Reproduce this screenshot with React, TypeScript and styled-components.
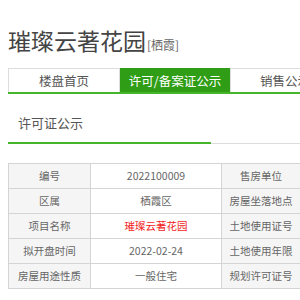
import styled, { createGlobalStyle } from 'styled-components';

// === STYLES ===

const GlobalStyle = createGlobalStyle`
  html, body {
    margin: 0;
    padding: 0;
    background: #fff;
    overflow: hidden;
  }
  body {
    font-family: "Noto Sans CJK SC", "Noto Sans", sans-serif;
  }
`;

const Page = styled.div`
  width: 440px;
  padding: 26px 0 0 8px;
`;

const Title = styled.h1`
  margin: 0;
  height: 28px;
  display: flex;
  align-items: baseline;
  font-size: 23px;
  line-height: 28px;
  font-weight: 400;
  color: #444;

  span {
    font-size: 12px;
    line-height: 12px;
    color: #666;
    margin-left: 1px;
  }
`;

const Nav = styled.div`
  display: flex;
  margin-top: 14px;
  height: 24px;
  border-bottom: 2px solid #45b52a;
`;

const Tab = styled.div<{ $active?: boolean; $w: number }>`
  width: ${p => p.$w}px;
  box-sizing: border-box;
  display: flex;
  align-items: center;
  justify-content: center;
  font-size: 12.5px;
  line-height: 16px;
  color: ${p => (p.$active ? '#fff' : '#555')};
  background: ${p => (p.$active ? '#2f9d15' : '#fff')};
  border: 1px solid ${p => (p.$active ? '#2f9d15' : '#ddd')};
  border-bottom: none;
`;

const Section = styled.div`
  margin-top: 20px;
`;

const SectionHead = styled.div`
  display: flex;
  border-bottom: 1px solid #ddd;
`;

const SectionTitle = styled.div`
  width: 203px;
  box-sizing: border-box;
  padding: 0 0 10px 10px;
  font-size: 13px;
  line-height: 18px;
  color: #555;
  border-bottom: 2px solid #45b52a;
  margin-bottom: -1px;
`;

const Table = styled.table`
  margin-top: 19px;
  border-collapse: collapse;
  border: 1px solid #bbb;
  table-layout: fixed;
  width: 400px;
`;

const Cell = styled.td<{ $label?: boolean; $w?: number; $red?: boolean }>`
  ${p => (p.$w ? `width: ${p.$w}px;` : '')}
  height: 25px;
  box-sizing: border-box;
  padding: 0;
  border: 1px solid #d4d4d4;
  background: ${p => (p.$label ? '#f5f5f5' : '#fff')};
  text-align: center;
  font-size: 10.5px;
  line-height: 14px;
  color: ${p => (p.$red ? '#f21c1c' : '#666')};
`;

// === DATA ===

const rows = [
  ['编号', '2022100009', '售房单位'],
  ['区属', '栖霞区', '房屋坐落地点'],
  ['项目名称', '璀璨云著花园', '土地使用证号'],
  ['拟开盘时间', '2022-02-24', '土地使用年限'],
  ['房屋用途性质', '一般住宅', '规划许可证号'],
];

const tabs = [
  { label: '楼盘首页', w: 112 },
  { label: '许可/备案证公示', w: 110, active: true },
  { label: '销售公示', w: 110 },
];

// === COMPONENT ===

export default function App() {
  return (
    <Page>
      <GlobalStyle />
      <Title>
        璀璨云著花园<span>[栖霞]</span>
      </Title>

      <Nav>
        {tabs.map(t => (
          <Tab key={t.label} $w={t.w} $active={t.active}>
            {t.label}
          </Tab>
        ))}
      </Nav>

      <Section>
        <SectionHead>
          <SectionTitle>许可证公示</SectionTitle>
        </SectionHead>

        <Table>
          <tbody>
            {rows.map((r, i) => (
              <tr key={r[0]}>
                <Cell $label $w={i === 0 ? 82 : undefined}>{r[0]}</Cell>
                <Cell $w={i === 0 ? 131 : undefined} $red={i === 2}>{r[1]}</Cell>
                <Cell $label $w={i === 0 ? 79 : undefined}>{r[2]}</Cell>
                <Cell>&nbsp;</Cell>
              </tr>
            ))}
          </tbody>
        </Table>
      </Section>
    </Page>
  );
}
